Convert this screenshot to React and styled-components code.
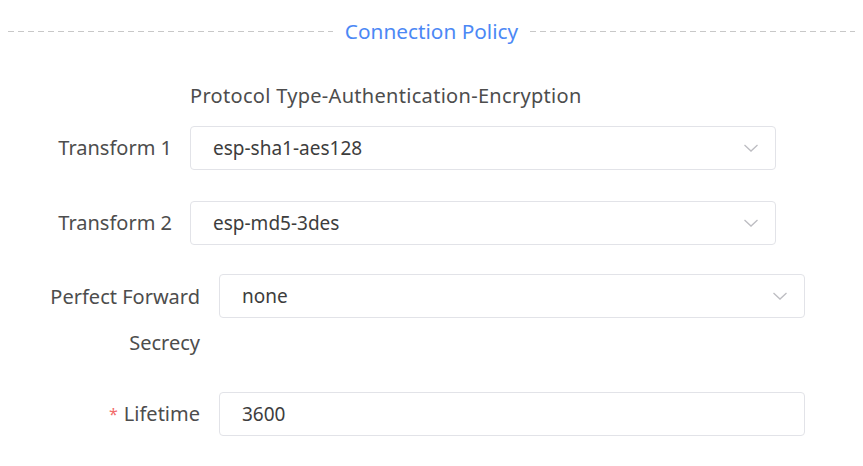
import React from "react";
import styled, { createGlobalStyle } from "styled-components";

const Global = createGlobalStyle`
  html, body { margin: 0; padding: 0; background: #fff; }
  body { font-family: "Noto Sans", "Open Sans", sans-serif; }
`;

const Page = styled.div`
  width: 863px;
  height: 466px;
  background: #fff;
  padding-top: 17px;
  box-sizing: border-box;
  overflow: hidden;
`;

const Divider = styled.div`
  display: flex;
  align-items: center;
  gap: 12px;
  padding: 0 8px;
  height: 28px;
`;

const Dash = styled.div`
  flex: 1;
  height: 1px;
  background: repeating-linear-gradient(to right, #c8c8c8 0 6px, transparent 6px 10px);
`;

const Title = styled.span`
  color: #4c88f5;
  font-size: 20.8px;
  line-height: 28px;
  white-space: nowrap;
`;

const SubHeader = styled.div`
  margin: 37px 0 0 190px;
  font-size: 20px;
  letter-spacing: 0.3px;
  line-height: 28px;
  color: #4d4d4d;
`;

const Row = styled.div`
  display: grid;
  grid-template-columns: ${(p) => p.$label}px 586px;
  column-gap: ${(p) => p.$gap}px;
  align-items: start;
  margin-top: ${(p) => p.$top}px;
`;

const Label = styled.div`
  text-align: right;
  font-size: 20px;
  line-height: ${(p) => p.$lh || 44}px;
  color: #4d4d4d;
  white-space: pre-line;
`;

const Star = styled.span`
  color: #f26b6b;
  font-size: 16px;
  margin-right: 6px;
  vertical-align: 1px;
`;

const Box = styled.div`
  height: 44px;
  box-sizing: border-box;
  border: 1px solid #e2e3e8;
  border-radius: 4px;
  display: flex;
  align-items: center;
  justify-content: space-between;
  padding: 0 16px 0 22px;
  font-size: 19px;
  color: #3d3d3d;
`;

const Chevron = () => (
  <svg width="16" height="10" viewBox="0 0 16 10" fill="none">
    <path d="M1.5 2 L8 8 L14.5 2" stroke="#bdbdc2" strokeWidth="1.3" />
  </svg>
);

export default function App() {
  return (
    <Page>
      <Global />
      <Divider>
        <Dash />
        <Title>Connection Policy</Title>
        <Dash />
      </Divider>
      <SubHeader>Protocol Type-Authentication-Encryption</SubHeader>
      <Row $label={172} $gap={18} $top={16}>
        <Label>Transform 1</Label>
        <Box>
          esp-sha1-aes128
          <Chevron />
        </Box>
      </Row>
      <Row $label={172} $gap={18} $top={31}>
        <Label>Transform 2</Label>
        <Box>
          esp-md5-3des
          <Chevron />
        </Box>
      </Row>
      <Row $label={200} $gap={19} $top={29}>
        <Label $lh={46}>{"Perfect Forward\nSecrecy"}</Label>
        <Box>
          none
          <Chevron />
        </Box>
      </Row>
      <Row $label={200} $gap={19} $top={26}>
        <Label>
          <Star>*</Star>Lifetime
        </Label>
        <Box>3600</Box>
      </Row>
    </Page>
  );
}
